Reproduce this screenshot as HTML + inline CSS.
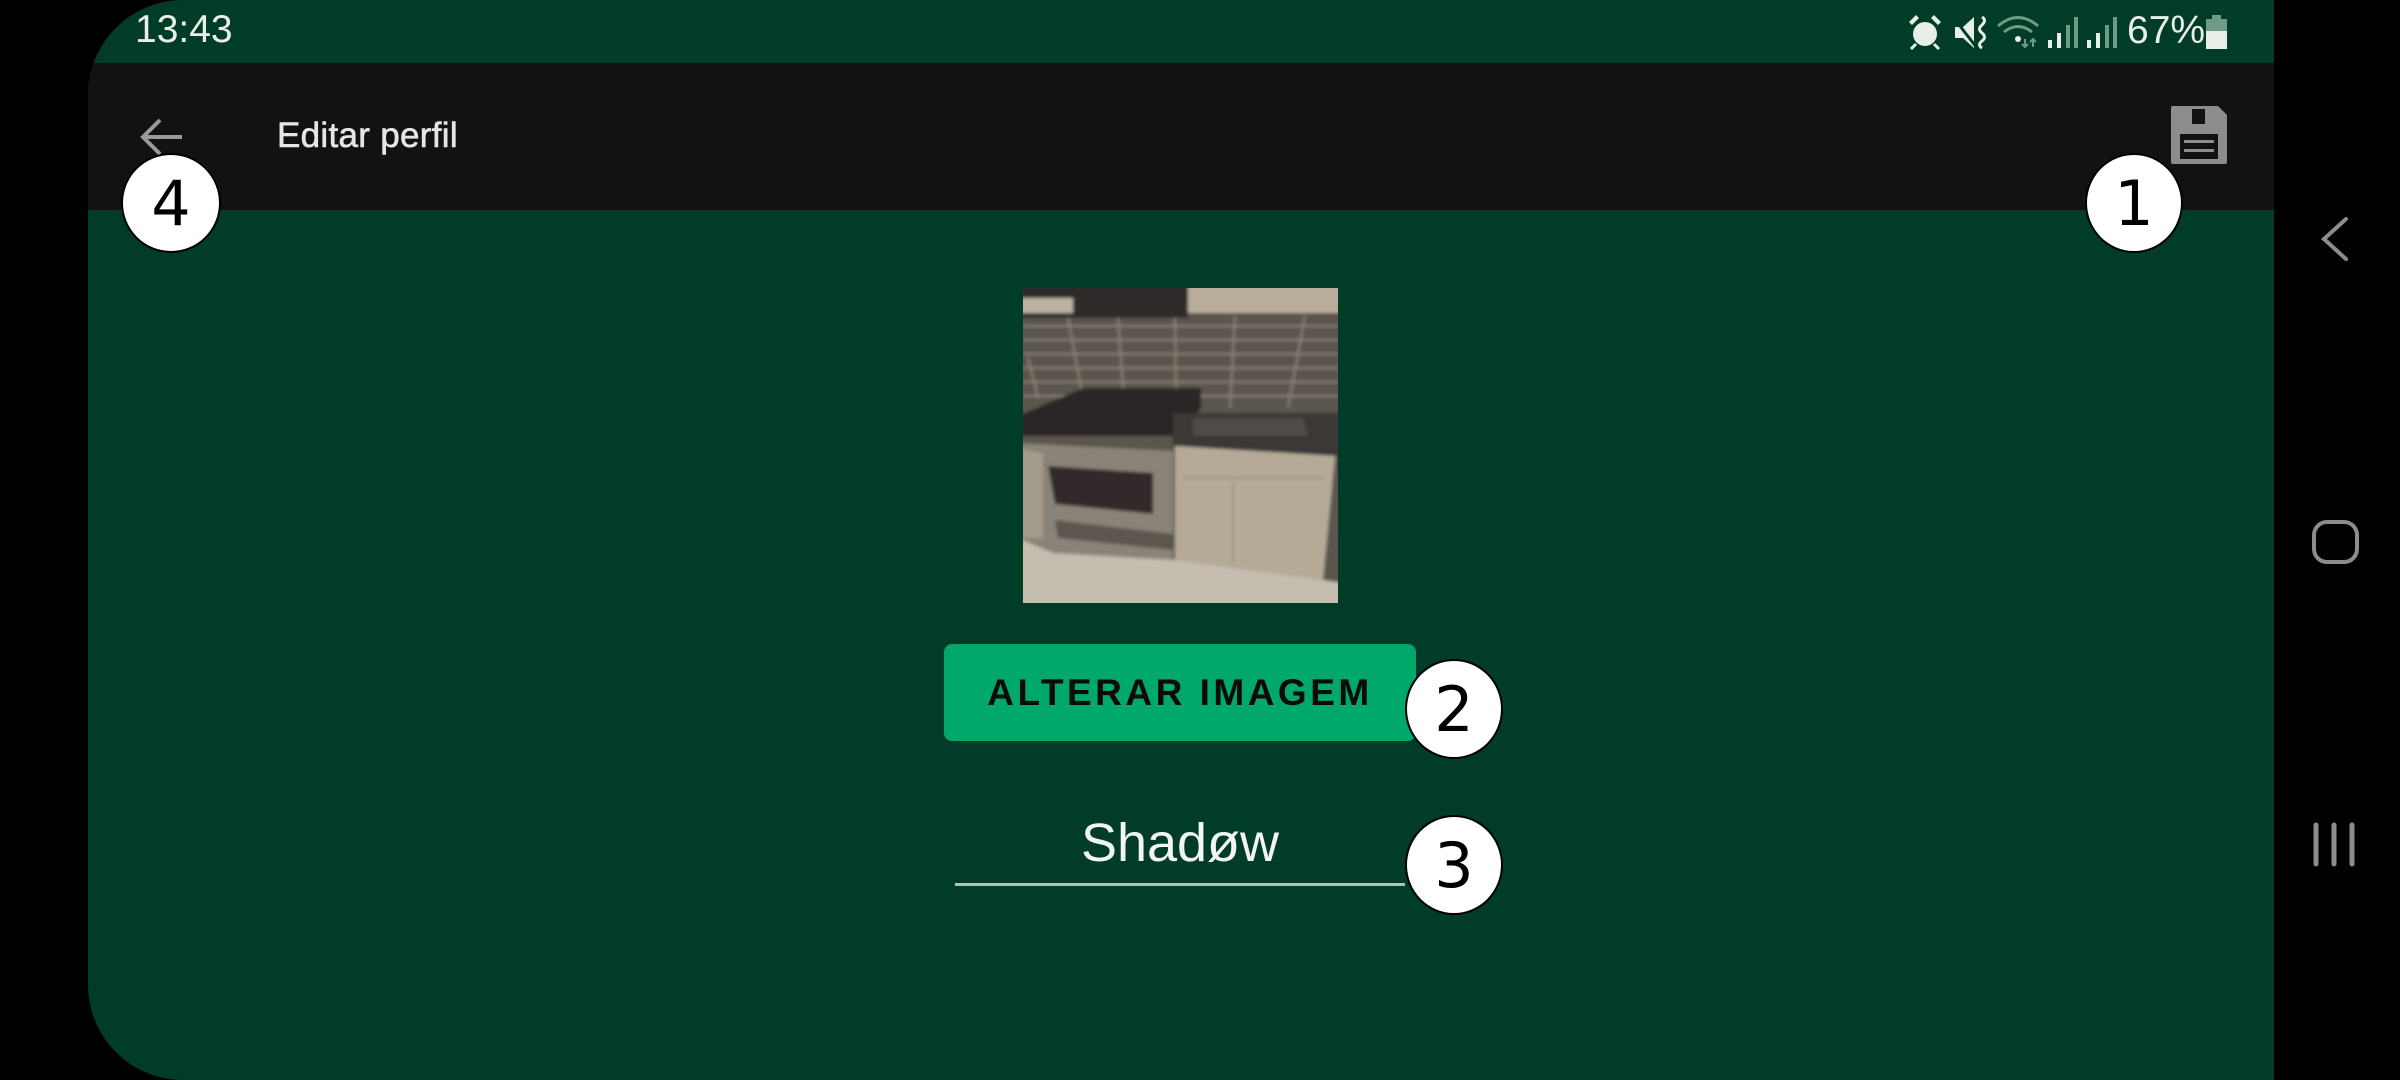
<!DOCTYPE html>
<html><head><meta charset="utf-8"><style>
html,body{margin:0;padding:0;width:2400px;height:1080px;background:#000;overflow:hidden;font-family:"Liberation Sans",sans-serif}
.screen{position:absolute;left:88px;top:0;width:2186px;height:1080px;background:#003c28;border-radius:95px 0 0 95px;overflow:hidden}
.tb{position:absolute;left:0;top:63px;width:2186px;height:147px;background:#121212}
.abs{position:absolute}
.circ{position:absolute;background:#fff;border:2px solid #000;border-radius:50%;color:#000;font-family:"DejaVu Sans",sans-serif;text-align:center;box-sizing:border-box}
</style></head><body>
<div class="screen">
<div class="tb"></div>
</div>
<div class="abs" style="left:135px;top:8px;color:#e8efe9;font-size:39px">13:43</div>
<svg class="abs" style="left:1900px;top:8px" width="340" height="50" viewBox="1900 10 340 50">
 <g fill="#e8efe9">
  <circle cx="1925" cy="36" r="12"/>
  <path d="M1909 24 l7-7 3 3-7 7z M1941 24 l-7-7 -3 3 7 7z"/>
  <path d="M1916 46 l-5 5 M1934 46 l5 5" stroke="#e8efe9" stroke-width="3"/>
  <path d="M1955 29 h8 l11-10 v31 l-11-10 h-8z"/>
  <path d="M1953 19 l24 31" stroke="#003c28" stroke-width="3"/>
  <path d="M1982 19 q5 3 0 8 q-5 4 0 8 q5 4 0 8 q-5 4 0 7" stroke="#e8efe9" stroke-width="3" fill="none"/>
  <rect x="2048" y="42" width="4" height="8"/><rect x="2057" y="35" width="4" height="15"/>
  <rect x="2087" y="42" width="4" height="8"/><rect x="2096" y="35" width="4" height="15"/>
 </g>
 <g fill="#6f9a86">
  <rect x="2066" y="27" width="4" height="23"/><rect x="2074" y="19" width="4" height="31"/>
  <rect x="2105" y="27" width="4" height="23"/><rect x="2113" y="19" width="4" height="31"/>
  <path d="M1998 28 q20 -17 40 0" stroke="#6f9a86" stroke-width="3" fill="none"/>
  <path d="M2004 34 q14 -11 28 0" stroke="#6f9a86" stroke-width="3" fill="none"/>
  <circle cx="2018" cy="41" r="3" fill="#e8efe9"/>
  <path d="M2025 41 v8 M2022 46 l3 3 3-3 M2033 49 v-8 M2030 44 l3-3 3 3" stroke="#6f9a86" stroke-width="2" fill="none"/>
  <rect x="2206" y="21" width="21" height="12"/><rect x="2212" y="17" width="9" height="5"/>
 </g>
 <rect x="2206" y="33" width="21" height="18" fill="#e8efe9"/>
</svg>
<div class="abs" style="left:2127px;top:9px;color:#e8efe9;font-size:39px">67%</div>

<svg class="abs" style="left:138px;top:114px" width="48" height="46" viewBox="0 0 48 46"><path d="M44 23 H6 M22 6 L5 23 L22 40" stroke="#9a9a9a" stroke-width="4" fill="none"/></svg>
<div class="abs" style="left:277px;top:116px;color:#e6e6e6;font-size:35px;letter-spacing:0.3px;-webkit-text-stroke:0.6px #e6e6e6">Editar perfil</div>
<svg class="abs" style="left:2170px;top:106px" width="60" height="60" viewBox="0 0 58 60">
 <path d="M0 2 Q0 0 2 0 H47 L56 9 V56 Q56 58 54 58 H2 Q0 58 0 56Z" fill="#8c8c8c"/>
 <rect x="21" y="3" width="13" height="15" fill="#121212"/>
 <rect x="9" y="28" width="38" height="25" fill="#121212"/>
 <rect x="13" y="34" width="30" height="3" fill="#8c8c8c"/>
 <rect x="13" y="43" width="30" height="3" fill="#8c8c8c"/>
</svg>

<svg class="abs" style="left:1023px;top:288px" width="315" height="315" viewBox="0 0 315 315">
 <defs><filter id="b"><feGaussianBlur stdDeviation="1.5"/></filter><clipPath id="c"><rect width="315" height="315"/></clipPath></defs>
 <g clip-path="url(#c)"><g filter="url(#b)">
 <rect x="-5" y="-5" width="325" height="325" fill="#5a544d"/>
 <rect x="-5" y="-5" width="170" height="35" fill="#2e2c2a"/>
 <rect x="-5" y="10" width="55" height="15" fill="#bdb3a2"/>
 <rect x="165" y="-5" width="155" height="30" fill="#b9ae9c"/>
 <g stroke="#8a8276" stroke-width="2">
  <path d="M0 38 H315 M0 52 H315 M0 66 H315 M0 80 H315 M0 94 H315 M0 108 H315"/>
  <path d="M45 30 L60 110 M95 30 L100 100 M152 30 L153 100 M212 28 L207 120 M282 28 L265 120 M5 70 L15 110"/>
 </g>
 <path d="M-5 128 L60 100 H178 L178 120 L155 148 H-5Z" fill="#2a2826"/>
 <path d="M150 125 H320 V168 L150 160Z" fill="#3a3734"/>
 <path d="M170 130 H280 L285 148 H170Z" fill="#514c46"/>
 <path d="M-5 155 L150 163 V272 L30 265 L-5 250Z" fill="#8a8378"/>
 <path d="M25 178 L130 185 V226 L32 216Z" fill="#302c29"/>
 <path d="M32 232 L150 246 V262 L35 250Z" fill="#5b5650"/>
 <path d="M152 158 L312 168 L300 292 L152 272Z" fill="#b5aa98"/>
 <path d="M210 195 V275 M160 190 H300" stroke="#9d9381" stroke-width="2"/>
 <path d="M-5 250 L30 265 L152 272 L300 292 L320 295 V320 H-5Z" fill="#c5bdb0"/>
 <path d="M-5 160 L20 165 V250 L-5 250Z" fill="#a59b8a"/>
 </g></g>
</svg>

<div class="abs" style="left:944px;top:644px;width:472px;height:97px;background:#00a86b;border-radius:8px;color:#0b0b0b;font-size:37px;font-weight:bold;letter-spacing:3.5px;line-height:97px;text-align:center">ALTERAR IMAGEM</div>

<div class="abs" style="left:955px;top:808px;width:450px;text-align:center;color:#f2f6f3;font-size:54px;line-height:70px">Shadøw</div>
<div class="abs" style="left:955px;top:883px;width:450px;height:3px;background:#a9c7b9"></div>

<div class="circ" style="left:121px;top:153px;width:100px;height:100px;font-size:62px;line-height:98px">4</div>
<div class="circ" style="left:2085px;top:153px;width:98px;height:100px;font-size:62px;line-height:98px">1</div>
<div class="circ" style="left:1405px;top:659px;width:98px;height:100px;font-size:62px;line-height:98px">2</div>
<div class="circ" style="left:1405px;top:815px;width:98px;height:100px;font-size:62px;line-height:98px">3</div>

<svg class="abs" style="left:2274px;top:180px" width="126" height="720" viewBox="2274 180 126 720">
 <path d="M2346 219 L2324 239 L2346 259" stroke="#8c8c8c" stroke-width="4" fill="none" stroke-linecap="round"/>
 <rect x="2314" y="522" width="43" height="40" rx="13" stroke="#8c8c8c" stroke-width="4" fill="none"/>
 <g stroke="#8c8c8c" stroke-width="5" stroke-linecap="round"><path d="M2316 825 V864 M2334 825 V864 M2352 825 V864"/></g>
</svg>
</body></html>
